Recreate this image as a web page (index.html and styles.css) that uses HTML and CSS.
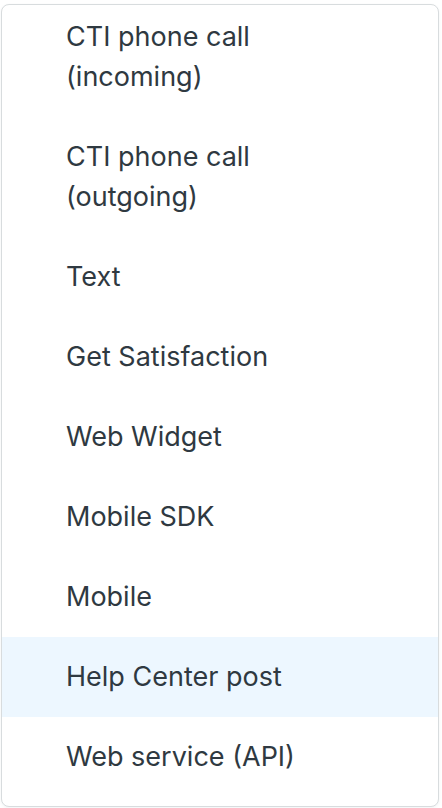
FILE: index.html
```html
<!DOCTYPE html>
<html lang="en">
<head>
<meta charset="utf-8">
<title>Channel menu</title>
<link rel="stylesheet" href="styles.css">
</head>
<body>
<div class="menu">
  <ul class="list">
    <li class="item">CTI phone call<br>(incoming)</li>
    <li class="item">CTI phone call<br>(outgoing)</li>
    <li class="item">Text</li>
    <li class="item">Get Satisfaction</li>
    <li class="item">Web Widget</li>
    <li class="item">Mobile SDK</li>
    <li class="item">Mobile</li>
    <li class="item item-active">Help Center post</li>
    <li class="item">Web service (API)</li>
  </ul>
</div>
</body>
</html>
```
FILE: styles.css
```css
html, body {
  margin: 0;
  padding: 0;
  background: #ffffff;
}
body {
  padding: 4px 3px 1px 1px;
  font-family: Inter, "Liberation Sans", Arial, sans-serif;
}
.menu {
  height: 803px;
  box-sizing: border-box;
  border: 1px solid #d8dcde;
  border-radius: 8px;
  background: #ffffff;
  overflow: hidden;
  box-shadow: 0 1px 3px rgba(4, 68, 77, 0.06);
}
.list {
  list-style: none;
  margin: -8px 0 0 0;
  padding: 0;
}
.item {
  padding: 20px 16px 20px 64px;
  font-size: 27px;
  line-height: 40px;
  color: #2f3941;
}
.item-active {
  background: #edf7ff;
}
```
